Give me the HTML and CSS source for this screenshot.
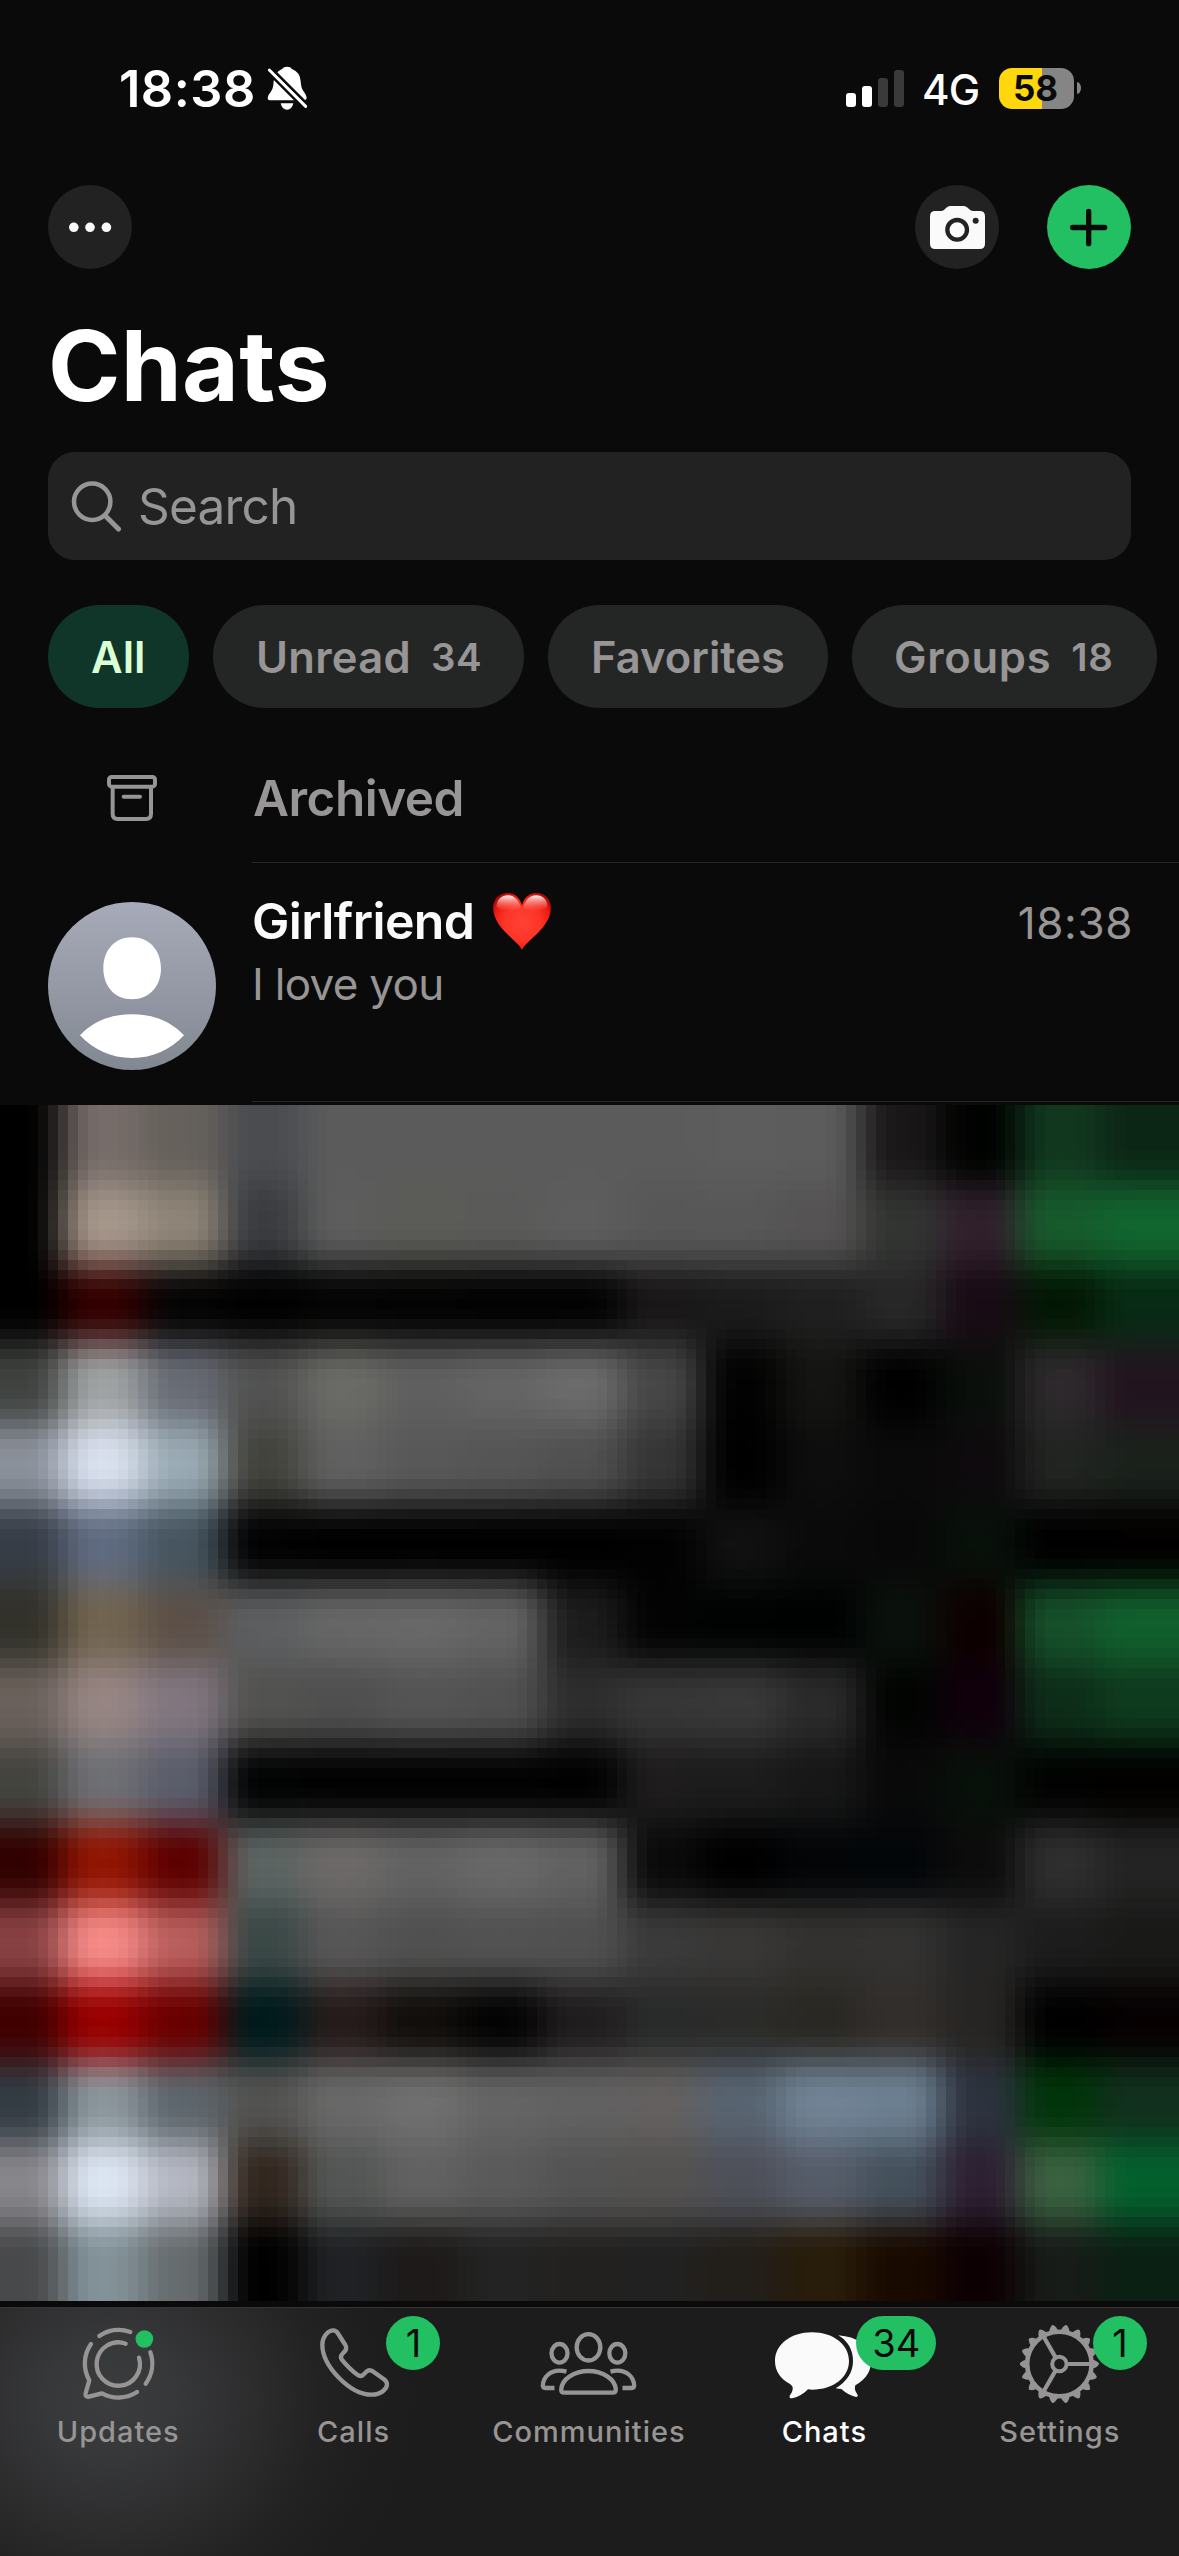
FILE: index.html
```html
<!DOCTYPE html>
<html lang="en">
<head>
<meta charset="utf-8">
<title>Chats</title>
<link rel="stylesheet" href="styles.css">
</head>
<body>
<div class="status">
  <span class="clock">18:38</span>
  <svg class="bell" viewBox="498 46 129 138"><path fill="#fff" d="M561 51Q572 51 576 58Q600 67 602 95Q603 115 610 124Q620 137 620 146Q619 152 612 152H512Q503 152 503 145Q503 137 512 127Q520 118 521 95Q524 67 546 58Q551 51 561 51ZM542 161H580Q576 180 561 180Q546 180 542 161Z"/><path d="M490 43L635 188" stroke="#0a0a0a" stroke-width="24"/><path d="M508 61L617 170" stroke="#fff" stroke-width="9" stroke-linecap="round"/></svg>
  <div class="signal"><i class="bar b1"></i><i class="bar b2"></i><i class="bar b3"></i><i class="bar b4"></i></div>
  <span class="network">4G</span>
  <div class="battery"><span class="level">58</span></div>
  <i class="nub"></i>
</div>

<header class="toolbar">
  <div class="round"><svg viewBox="0 0 84 84"><g fill="#fafafa"><circle cx="25.8" cy="42.3" r="4.8"/><circle cx="42" cy="42.3" r="4.8"/><circle cx="58.4" cy="42.3" r="4.8"/></g></svg></div>
  <div class="round camera"><svg viewBox="255 405 252 252"><path fill="#fafafa" d="M316 483H334Q340 483 345 477L349 473Q354 468 361 468H401Q408 468 413 473L418 478Q422 483 429 483H449Q465 483 465 499V581Q465 597 449 597H316Q300 597 300 581V499Q300 483 316 483Z"/><circle cx="381.500" cy="539.500" r="29.500" fill="none" stroke="#222" stroke-width="13"/><circle cx="437" cy="512" r="9" fill="#222"/></svg></div>
  <div class="round add"><svg viewBox="651 405 252 252"><path d="M776 484V581M728 532.500H824" stroke="#0a0a0a" stroke-width="16" stroke-linecap="round"/></svg></div>
</header>
<h1 class="title">Chats</h1>

<div class="search">
  <svg viewBox="0 0 52 52"><circle cx="22.200" cy="21.700" r="18.200" fill="none" stroke="#979595" stroke-width="4.500"/><path d="M35.500 36L48.500 49" stroke="#979595" stroke-width="5" stroke-linecap="round"/></svg>
  <span class="placeholder">Search</span>
</div>

<nav class="chips">
  <span class="chip all">All</span>
  <span class="chip unread">Unread<b class="count">34</b></span>
  <span class="chip fav">Favorites</span>
  <span class="chip groups">Groups<b class="count">18</b></span>
</nav>

<section class="archived">
  <div class="lead"><svg class="box" viewBox="198 132 156 144"><g fill="none" stroke="#979595" stroke-width="12"><rect x="207" y="141" width="138" height="29" rx="8"/><path d="M218 172V252Q218 267 233 267H318Q333 267 333 252V172"/><path d="M251 200.500H300" stroke-linecap="round"/></g></svg></div>
  <div class="archived-label">Archived</div>
</section>

<section class="chat">
  <svg class="avatar" viewBox="24 516 504 504"><defs><linearGradient id="av" x1="0" y1="0" x2="0" y2="1"><stop offset="0" stop-color="#a7abb9"/><stop offset="1" stop-color="#828892"/></linearGradient></defs><circle cx="276" cy="768" r="252" fill="url(#av)"/><path fill="#fff" d="M276 622C328 622 363 661 363 715C363 769 328 808 276 808C224 808 190 769 190 715C190 661 224 622 276 622ZM120 916C158 875 210 853 276 853C342 853 394 875 432 916C390 960 340 984 276 984C212 984 162 960 120 916Z"/></svg>
  <div class="chat-body">
    <div class="line1"><span class="name">Girlfriend</span>
      <svg class="heart" viewBox="1356 486 180 178"><defs><radialGradient id="hg" cx=".5" cy=".52" r=".62"><stop offset="0" stop-color="#ff4335"/><stop offset=".5" stop-color="#fd3528"/><stop offset=".78" stop-color="#ee1c12"/><stop offset="1" stop-color="#a80400"/></radialGradient><linearGradient id="hs" x1="0" y1="0" x2="0" y2="1"><stop offset="0" stop-color="#fff" stop-opacity=".95"/><stop offset="1" stop-color="#ff8a80" stop-opacity="0"/></linearGradient></defs><path fill="url(#hg)" d="M1446 661C1436 634 1359 594 1359 534C1359 506 1379 489 1403 489C1424 489 1440 503 1446 527C1452 503 1468 489 1490 489C1514 489 1533 506 1533 534C1533 594 1456 634 1446 661Z"/><path fill="url(#hs)" d="M1369 530C1370 508 1385 496 1403 496C1424 496 1437 512 1442 535C1420 545 1385 548 1369 530ZM1450 535C1455 512 1469 496 1489 496C1508 496 1522 508 1523 530C1507 548 1472 545 1450 535Z"/></svg>
      <span class="time">18:38</span></div>
    <div class="message">I love you</div>
  </div>
</section>

<canvas class="mosaic" width="1179" height="1196"></canvas>

<footer class="tabs">
  <div class="tab"><svg viewBox="53 48 360 252"><g fill="none" stroke="#979494" stroke-width="13" stroke-linecap="round" stroke-linejoin="round"><path d="M256 113A65 65 0 1 0 296 155"/><path d="M177 90A102 102 0 0 1 270 78M330 139A102 102 0 0 1 316 233M290 258A102 102 0 0 1 185 262L146 272Q134 274 136 261L147 223A102 102 0 0 1 152 114"/></g><circle cx="312" cy="99" r="26.500" fill="#22c062"/></svg><span class="tab-label">Updates</span></div>
  <div class="tab"><svg viewBox="759 48 360 252"><path fill="none" stroke="#979494" stroke-width="13" stroke-linejoin="round" d="M880 73C864 73 847 92 847 116C847 180 930 266 995 266C1022 266 1041 250 1041 235Q1041 227 1032 220L1000 197Q988 189 979 197L969 207Q961 214 952 206C934 193 917 175 905 160Q900 153 906 145L915 135Q922 127 916 117L893 81Q888 73 880 73Z"/></svg><span class="badge calls-badge">1</span><span class="tab-label">Calls</span></div>
  <div class="tab"><svg viewBox="145.500 48 360 252"><g fill="none" stroke="#979494" stroke-width="13"><ellipse cx="327" cy="124" rx="35.500" ry="39.500"/><ellipse cx="240" cy="142" rx="24" ry="28"/><ellipse cx="413.500" cy="142" rx="24" ry="28"/><path d="M245 250C247 220 284 195 327 195C370 195 407 220 409 250Q409 260 400 260H254Q245 260 245 250ZM261 197Q250 194 240 194C212 194 192 212 190 238Q190 246 197 246H225M393 197Q404 194 414 194C442 194 462 212 464 238Q464 246 457 246H429"/></g></svg><span class="tab-label">Communities</span></div>
  <div class="tab active"><svg viewBox="852 48 360 252"><path fill="#fafafa" d="M996 79C1060 79 1107 116 1107 165C1107 214 1060 251 996 251L984 250C970 264 955 273 937 277Q927 278 929 269Q938 259 938 250Q940 241 930 234C902 220 885 195 885 165C885 116 932 79 996 79ZM1075 88Q1119 115 1119 165Q1119 215 1067 247Q1078 249 1084 249Q1105 268 1128 273Q1137 271 1131 263Q1122 252 1126 238Q1176 210 1173 160Q1160 95 1075 88Z"/></svg><span class="badge chats-badge">34</span><span class="tab-label">Chats</span></div>
  <div class="tab"><svg viewBox="0 0 120 84"><defs><path id="tooth" d="M33 -4.600Q37 -3.500 38.500 -1.700Q40.800 0 38.500 1.700Q37 3.500 33 4.600Z"/></defs><g transform="translate(60.400 42)" fill="#979494"><g fill="none" stroke="#979494" stroke-width="4.600"><circle r="32.200"/><circle r="7.200" stroke-width="4"/><path stroke-width="4.200" d="M8 0H32M-4 -6.900L-16 -27.700M-4 6.900L-16 27.700"/></g><use href="#tooth"/><use href="#tooth" transform="rotate(20)"/><use href="#tooth" transform="rotate(40)"/><use href="#tooth" transform="rotate(60)"/><use href="#tooth" transform="rotate(80)"/><use href="#tooth" transform="rotate(100)"/><use href="#tooth" transform="rotate(120)"/><use href="#tooth" transform="rotate(140)"/><use href="#tooth" transform="rotate(160)"/><use href="#tooth" transform="rotate(180)"/><use href="#tooth" transform="rotate(200)"/><use href="#tooth" transform="rotate(220)"/><use href="#tooth" transform="rotate(240)"/><use href="#tooth" transform="rotate(260)"/><use href="#tooth" transform="rotate(280)"/><use href="#tooth" transform="rotate(300)"/><use href="#tooth" transform="rotate(320)"/><use href="#tooth" transform="rotate(340)"/></g></svg><span class="badge settings-badge">1</span><span class="tab-label">Settings</span></div>
</footer>
<script src="mosaic.js"></script>
</body>
</html>
```
FILE: styles.css
```css
* { box-sizing: border-box; }
body {
  margin: 0;
  width: 1179px;
  height: 2556px;
  overflow: hidden;
  background: #0a0a0a;
  color: #fff;
  font-family: Inter, "Liberation Sans", sans-serif;
  display: flex;
  flex-direction: column;
}
svg { display: block; flex: none; }
span, h1, .message, .archived-label { white-space: nowrap; }

.status { height: 176px; flex: none; display: flex; align-items: center; padding-left: 119px; }
.clock { width: 147px; font-size: 50.5px; font-weight: 600; letter-spacing: 0.5px; }
.bell { width: 43px; height: 46px; }
.signal { display: flex; gap: 6px; align-items: flex-end; height: 37px; margin-left: 537px; }
.bar { width: 10px; border-radius: 3px; background: #fff; }
.b1 { height: 14px; }
.b2 { height: 21px; }
.b3 { height: 29px; background: #3a3a3a; }
.b4 { height: 37px; background: #3a3a3a; }
.network { width: 77px; margin-left: 18px; margin-top: 3px; font-size: 42px; font-weight: 500; letter-spacing: -0.8px; }
.battery {
  width: 75px; height: 41px; border-radius: 13px;
  background: linear-gradient(90deg, #fed70c 43px, #858585 43px);
  display: flex; align-items: center; justify-content: center;
}
.level { color: #0a0a0a; font-size: 35px; font-weight: 700; margin-right: 2px; }
.nub { width: 4px; height: 12px; margin-left: 3px; border-radius: 0 4px 4px 0 / 0 6px 6px 0; background: #858585; }

.toolbar { margin-top: 9px; padding: 0 48px; height: 84px; flex: none; display: flex; gap: 48px; }
.round { width: 84px; height: 84px; border-radius: 50%; background: #222; }
.camera { margin-left: auto; }
.add { background: #22c062; }
.title { margin: 37px 0 0 48px; height: 120px; line-height: 120px; font-size: 98px; font-weight: 700; letter-spacing: 0.3px; flex: none; }

.search {
  margin: 26px 48px 0; height: 108px; flex: none; border-radius: 27px; background: #222;
  display: flex; align-items: center; padding-left: 22px; color: #979595;
}
.search svg { width: 52px; height: 52px; }
.placeholder { margin-left: 16px; font-size: 49.5px; letter-spacing: -0.8px; }

.chips { margin: 45px 0 0 48px; height: 103px; flex: none; display: flex; gap: 24px; font-size: 43.5px; font-weight: 600; }
.chip { display: flex; align-items: center; flex: none; padding-left: 42px; border-radius: 52px; background: #242625; color: #979595; }
.all { width: 141px; padding-left: 43px; background: #103529; color: #dcfed4; }
.unread { width: 311px; padding-left: 43px; letter-spacing: 0.3px; }
.fav { width: 280px; padding-left: 43px; }
.groups { width: 305px; letter-spacing: 0.7px; }
.count { margin-left: 20px; font-size: 38.5px; font-weight: 600; letter-spacing: 0.6px; }

.archived { height: 154px; flex: none; display: flex; color: #979595; }
.lead { width: 252px; flex: none; padding: 66px 0 0 106px; }
.box { width: 52px; height: 48px; }
.archived-label { flex: 1; height: 155px; padding: 60px 0 0 1px; line-height: 60px; font-size: 49.5px; font-weight: 600; letter-spacing: -0.5px; border-bottom: 1px solid #262626; }

.chat { height: 243px; flex: none; display: flex; padding-left: 48px; }
.avatar { width: 168px; height: 168px; margin-top: 40px; }
.chat-body { margin-left: 36px; flex: 1; height: 240px; border-bottom: 1px solid #262626; padding: 29px 46px 0 0; }
.line1 { display: flex; height: 60px; align-items: center; }
.name { width: 240px; font-size: 50px; font-weight: 600; letter-spacing: -0.6px; color: #fafafa; }
.heart { width: 60px; height: 59px; }
.time { margin-left: auto; font-size: 44px; letter-spacing: 0.6px; color: #979595; padding-top: 3px; }
.message { height: 66px; line-height: 66px; font-size: 44px; letter-spacing: -0.7px; color: #979595; }

.mosaic { display: block; flex: none; width: 1179px; height: 1196px; }

.tabs {
  margin-top: 6px; height: 249px; flex: none; border-top: 1px solid #333;
  display: grid; grid-template-columns: repeat(5, 235.4px);
  background: radial-gradient(ellipse 330px 300px at 110px 90px, #3b3c3e 0%, rgba(57, 58, 60, .92) 20%, rgba(54, 54, 56, .66) 42%, rgba(48, 45, 46, .36) 64%, rgba(40, 36, 37, .12) 84%, rgba(28, 28, 28, 0) 100%), #1c1c1c;
  color: #979494;
}
.tab { position: relative; display: flex; flex-direction: column; align-items: center; padding-top: 14px; }
.tab svg { width: 120px; height: 84px; }
.tab-label { margin-top: 6px; line-height: 40px; font-size: 29px; font-weight: 450; letter-spacing: 1px; padding-left: 1px; }
.active { color: #fff; }
.badge {
  position: absolute; top: 8px; height: 54px; border-radius: 27px; background: #22c062; color: #0a0a0a;
  font-size: 38px; line-height: 54px; text-align: center;
}
.calls-badge { left: 151px; width: 54px; }
.chats-badge { left: 150px; width: 80px; }
.settings-badge { left: 151.500px; width: 54px; }
```
FILE: mosaic.js
```js
// Pixelated, softened colour blocks that hide the rest of the chat list.
const cells = `
000000 766c69 66615c 4a4c50 5b5b5b 5b5b5b 5b5b5b 5b5b5b 5b5b5b 5d5d5d 5c5c5c 1a1718 000200 11381f 0c2616
000000 a5968a 8e8477 3a3c40 5c5d5c 5b5b57 5a5a59 5d5d5d 575757 575757 555353 323432 30202c 175a2c 11652f
000000 330000 050404 010101 040404 030303 020202 020202 191718 1b1b1b 1f1f1f 272727 190b15 031804 072b14
3f423f 9fa2a3 676b74 525252 6a6a66 5f5f5f 646464 6b6b6b 464646 020202 141412 000000 0a0f0b 2d292c 22141f
8b919b d9e0ee 9aaab4 43433d 606060 585858 555555 505050 353535 000000 0d0d0d 0a0a0a 0e0a0d 212421 1a211b
373d46 5f6b80 465560 020202 000000 000000 000000 000000 020202 101010 0a0a0a 080808 08100a 000000 020000
32312a 716450 5c5048 5c5e60 666666 686868 636363 1c1c1c 030303 000302 000101 0a110c 0d0000 15502a 115f2d
6b615c 968583 81767f 525250 4f4f4f 545454 515151 2d2d2e 363636 393838 2a2a2a 020402 0f000b 0d2d19 0e3a1d
44443f 6e6f74 5a5d6b 020303 020202 020202 020202 010101 1e1c1d 1c1c1c 171717 090909 08100a 010201 020100
310000 921503 5d0000 5b6462 6c6968 626262 686868 616161 0a0a0a 000000 030507 030609 0c0c0c 2e2e2e 222322
884143 f58a87 b85e5c 3a4846 575656 505050 525252 505050 3a3a3a 383736 32312f 333231 252525 1c1c1c 191a18
400000 990000 690000 001a1c 261b1b 110e0b 040303 201d1e 292a2a 2b2b29 2a2823 322e2c 272523 000000 060001
333b43 8b969c 5d666c 525250 686868 6f6f6f 646464 616161 63605f 576370 708294 6c7f90 2c323e 01340a 11301d
87868b dce5f2 b4b7c1 32271f 535654 606160 5a5a5a 535353 545250 4e5059 555c69 44505b 2d2032 3a6140 03602d
48494a 839299 666c6e 000000 1f2124 1d1a19 232323 232120 212121 221e19 281c0a 190a00 0d0003 171c18 0a2012
`.trim().split("\n").map(row => row.split(" ").map(hex => [0, 2, 4].map(i => parseInt(hex.substr(i, 2), 16))));

const canvas = document.querySelector(".mosaic");
const ctx = canvas.getContext("2d");
const CELL = 79.77;
const STEP = CELL / 8;
const smooth = t => t * t * (3 - 2 * t);
const ease = t => 0.5 * smooth(t) + 0.5 * smooth(smooth(t));
const clamp = n => Math.max(0, Math.min(14, n));

// Cell index on either side of a position, and the blend between the two.
function locate(position, origin) {
  const p = (position - origin) / CELL - 0.5;
  const i = Math.floor(p);
  return [clamp(i), clamp(i + 1), ease(p - i)];
}

for (let y = -5; y < canvas.height; y += STEP) {
  const [r0, r1, v] = locate(y + STEP / 2, 0);
  const top = Math.round(y), bottom = Math.round(y + STEP);
  for (let x = -1.6; x < canvas.width; x += STEP) {
    const [c0, c1, h] = locate(x + STEP / 2, 62.8 - CELL);
    const rgb = [0, 1, 2].map(k => {
      const upper = cells[r0][c0][k] * (1 - h) + cells[r0][c1][k] * h;
      const lower = cells[r1][c0][k] * (1 - h) + cells[r1][c1][k] * h;
      return Math.round(upper * (1 - v) + lower * v);
    });
    const left = Math.round(x), right = Math.round(x + STEP);
    ctx.fillStyle = `rgb(${rgb})`;
    ctx.fillRect(left, top, right - left, bottom - top);
  }
}
```
